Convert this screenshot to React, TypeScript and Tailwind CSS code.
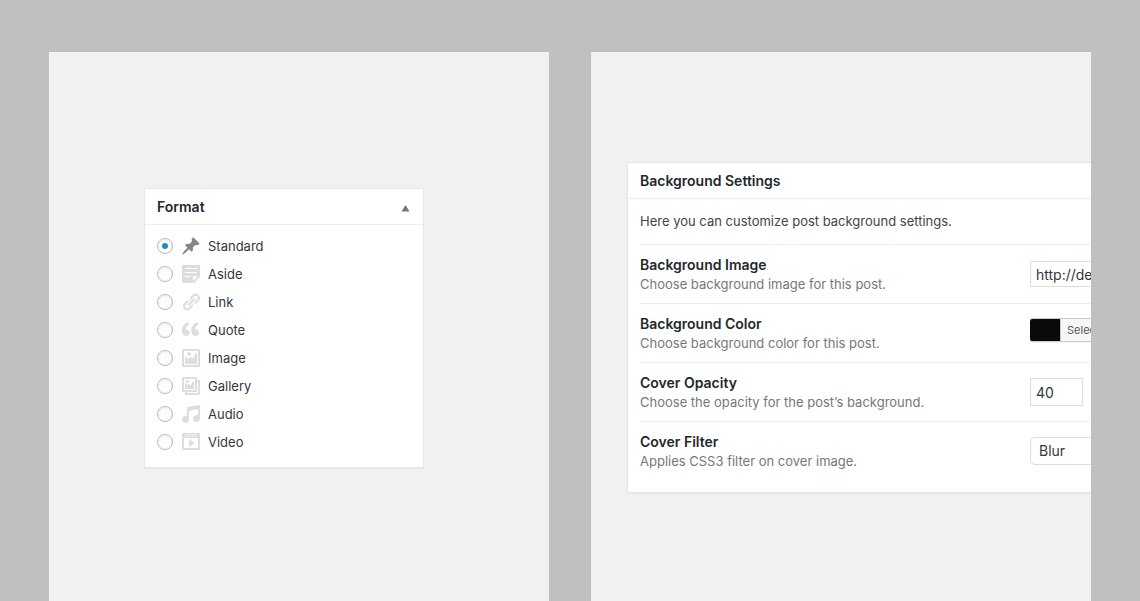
import React, { useState } from 'react';

interface PostFormat {
  id: string;
  label: string;
  icon: string;
}

const FORMATS: PostFormat[] = [
  {
    id: 'standard',
    label: 'Standard',
    icon: 'M10.44 3.02l1.82-1.82 6.36 6.35-1.83 1.82c-1.05-.68-2.48-.57-3.41.36l-.75.75c-.92.93-1.04 2.35-.35 3.41l-1.83 1.82-2.41-2.41-2.8 2.79c-.42.42-3.38 2.71-3.8 2.29s1.86-3.39 2.28-3.81l2.79-2.79L4.1 9.36l1.83-1.82c1.05.69 2.48.57 3.4-.36l.75-.75c.93-.92 1.05-2.35.36-3.41z'
  },
  {
    id: 'aside',
    label: 'Aside',
    icon: 'M1 1h18v12l-6 6H1V1zm3 3v1h12V4H4zm0 4v1h12V8H4zm6 5v-1H4v1h6zm2 4l5-5h-5v5z'
  },
  {
    id: 'link',
    label: 'Link',
    icon: 'M17.74 2.76c1.68 1.69 1.68 4.41 0 6.1l-1.53 1.52c-1.12 1.12-2.7 1.47-4.14 1.09l2.62-2.61.76-.77.76-.76c.84-.84.84-2.2 0-3.04-.84-.85-2.2-.85-3.04 0l-.77.76-3.38 3.38c-.37-1.44-.02-3.02 1.1-4.14l1.52-1.53c1.69-1.68 4.42-1.68 6.1 0zM8.59 13.43l5.34-5.34c.42-.42.42-1.1 0-1.52-.44-.43-1.13-.39-1.53 0l-5.33 5.34c-.42.42-.42 1.1 0 1.52.44.43 1.13.39 1.52 0zm-.76 2.29l4.14-4.15c.38 1.44.03 3.02-1.09 4.14l-1.52 1.53c-1.69 1.68-4.41 1.68-6.1 0-1.68-1.68-1.68-4.42 0-6.1l1.53-1.52c1.12-1.12 2.7-1.47 4.14-1.1l-4.14 4.15c-.85.84-.85 2.2 0 3.05.84.84 2.2.84 3.04 0z'
  },
  {
    id: 'quote',
    label: 'Quote',
    icon: 'M8.54 12.74c0-.87-.24-1.61-.72-2.22-.73-.92-2.14-1.03-2.96-.85-.34-1.93 1.3-4.39 3.42-5.45L6.65 1.94C3.45 3.46.31 6.96.85 11.37 1.19 14.16 2.8 16 5.08 16c1 0 1.83-.29 2.48-.88.66-.59.98-1.38.98-2.38zm9.43 0c0-.87-.24-1.61-.72-2.22-.73-.92-2.14-1.03-2.96-.85-.34-1.93 1.3-4.39 3.42-5.45l-1.63-2.28c-3.2 1.52-6.34 5.02-5.8 9.43.34 2.79 1.95 4.63 4.23 4.63 1 0 1.83-.29 2.48-.88.66-.59.98-1.38.98-2.38z'
  },
  {
    id: 'image',
    label: 'Image',
    icon: 'M2.25 1h15.5c.69 0 1.25.56 1.25 1.25v15.5c0 .69-.56 1.25-1.25 1.25H2.25C1.56 19 1 18.44 1 17.75V2.25C1 1.56 1.56 1 2.25 1zM17 17V3H3v14h14zM10 6c0-1.1-.9-2-2-2s-2 .9-2 2 .9 2 2 2 2-.9 2-2zm3 5s0-6 3-6v10c0 .55-.45 1-1 1H5c-.55 0-1-.45-1-1V8c2 0 3 4 3 4s1-3 3-3 3 2 3 2z'
  },
  {
    id: 'gallery',
    label: 'Gallery',
    icon: 'M16 4h1.96c.57 0 1.04.47 1.04 1.04v12.92c0 .57-.47 1.04-1.04 1.04H5.04C4.47 19 4 18.53 4 17.96V16H2.04C1.47 16 1 15.53 1 14.96V2.04C1 1.47 1.47 1 2.04 1h12.92c.57 0 1.04.47 1.04 1.04V4zM3 14h11V3H3v11zm5-8.5C8 4.67 7.33 4 6.5 4S5 4.67 5 5.5 5.67 7 6.5 7 8 6.33 8 5.5zm2 4.5s1-5 3-5v8H4V7c2 0 2 3 2 3s.33-2 2-2 2 2 2 2zm7 7V6h-1v8.96c0 .57-.47 1.04-1.04 1.04H6v1h11z'
  },
  {
    id: 'audio',
    label: 'Audio',
    icon: 'M6.99 3.08l11.02-2c.55-.08.99.45.99 1V14.5c0 1.94-1.57 3.5-3.5 3.5S12 16.44 12 14.5c0-1.93 1.57-3.5 3.5-3.5.54 0 1.04.14 1.5.35V5.08l-9 2V16c-.24 1.7-1.74 3-3.5 3C2.57 19 1 17.44 1 15.5 1 13.57 2.57 12 4.5 12c.54 0 1.04.14 1.5.35V4.08c0-.55.44-.91.99-1z'
  },
  {
    id: 'video',
    label: 'Video',
    icon: 'M2 1h16c.55 0 1 .45 1 1v16l-18-.02V2c0-.55.45-1 1-1zm4 1L4 5h1l2-3H6zm4 0H9L7 5h1zm3 0h-1l-2 3h1zm3 0h-1l-2 3h1zm1 14V6H3v10h14zM8 7l6 4-6 4V7z'
  }
];

interface SettingRowProps {
  title: string;
  description: string;
  htmlFor: string;
  children: React.ReactNode;
}

const SettingRow: React.FC<SettingRowProps> = ({ title, description, htmlFor, children }) => (
  <div className="flex items-center border-b border-[#eee] py-[10px] last:border-b-0">
    <div className="w-[390px] shrink-0">
      <label htmlFor={htmlFor} className="block text-sm leading-5 font-semibold text-[#23282d]">
        {title}
      </label>
      <p className="text-[13px] leading-[18px] text-[#777]">{description}</p>
    </div>
    <div className="-my-2 flex items-center">{children}</div>
  </div>
);

const FormatBox = () => {
  const [format, setFormat] = useState('standard');
  const [open, setOpen] = useState(true);

  return (
    <section className="w-[280px] border border-[#e5e5e5] bg-white shadow-[0_1px_1px_rgba(0,0,0,0.04)]">
      <div className="flex h-9 items-center justify-between border-b border-[#eee] px-3">
        <h2 className="text-sm font-semibold text-[#23282d]">Format</h2>
        <button type="button" aria-label="Toggle panel" aria-expanded={open} onClick={() => setOpen(!open)}>
          <svg className="h-3 w-3 fill-[#72777c]" viewBox="0 0 12 12">
            <path d="M6.5 4l4 6.5h-8z" />
          </svg>
        </button>
      </div>

      {open && (
        <div className="px-3 pt-[7px] pb-[11px]">
          {FORMATS.map(item => (
            <label key={item.id} className="flex h-7 items-center text-[13px] text-[#32373c]">
              <input
                type="radio"
                name="post-format"
                value={item.id}
                checked={format === item.id}
                onChange={() => setFormat(item.id)}
                className="mr-2 grid h-4 w-4 appearance-none place-items-center rounded-full border border-[#b4b9be] bg-white shadow-inner before:h-[6px] before:w-[6px] before:rounded-full checked:before:bg-[#1e8cbe]"
              />
              <svg
                className={`mr-[7px] h-5 w-5 ${format === item.id ? 'fill-[#82878c]' : 'fill-[#ddd]'}`}
                viewBox="0 0 20 20"
              >
                <path d={item.icon} />
              </svg>
              <span className="pt-0.5">{item.label}</span>
            </label>
          ))}
        </div>
      )}
    </section>
  );
};

const BackgroundBox = () => {
  const [image, setImage] = useState('http://demo.example.com/background.jpg');
  const [opacity, setOpacity] = useState('40');

  return (
    <section className="w-[680px] border border-[#e5e5e5] bg-white shadow-[0_1px_1px_rgba(0,0,0,0.04)]">
      <div className="flex h-9 items-center border-b border-[#eee] px-3">
        <h2 className="text-sm font-semibold text-[#23282d]">Background Settings</h2>
      </div>

      <div className="px-3 pb-3">
        <p className="border-b border-[#eee] py-3 text-[13px] leading-[21px] text-[#444]">
          Here you can customize post background settings.
        </p>

        <SettingRow title="Background Image" description="Choose background image for this post." htmlFor="bg-image">
          <input
            id="bg-image"
            type="text"
            value={image}
            onChange={e => setImage(e.target.value)}
            className="h-[26px] w-[230px] border border-[#ddd] px-[5px] text-sm text-[#32373c]"
          />
        </SettingRow>

        <SettingRow title="Background Color" description="Choose background color for this post." htmlFor="bg-color">
          <button
            id="bg-color"
            type="button"
            className="mb-[6px] flex h-6 overflow-hidden rounded-[3px] border border-l-0 border-[#ccc] bg-[#0a0a0a] pl-[30px] shadow-xs"
          >
            <span className="border-l border-[#ccc] bg-[#f7f7f7] px-[6px] text-[11px] leading-[22px] text-[#555]">
              Select Color
            </span>
          </button>
        </SettingRow>

        <SettingRow title="Cover Opacity" description="Choose the opacity for the post’s background." htmlFor="bg-opacity">
          <input
            id="bg-opacity"
            type="text"
            value={opacity}
            onChange={e => setOpacity(e.target.value)}
            className="h-7 w-[53px] border border-[#ddd] px-[5px] text-sm text-[#32373c]"
          />
        </SettingRow>

        <SettingRow title="Cover Filter" description="Applies CSS3 filter on cover image." htmlFor="bg-filter">
          <select
            id="bg-filter"
            defaultValue="Blur"
            className="h-7 w-[120px] appearance-none rounded-[5px] border border-[#ddd] bg-white px-2 text-sm text-[#32373c]"
          >
            <option>None</option>
            <option>Blur</option>
            <option>Grayscale</option>
          </select>
        </SettingRow>
      </div>
    </section>
  );
};

const App = () => {
  return (
    <main className="grid min-h-screen grid-cols-2 gap-[42px] bg-[#c0c0c0] px-[49px] pt-[52px] font-['Inter',sans-serif]">
      <div className="overflow-hidden bg-[#f1f1f1] pt-[136px] pl-[95px]">
        <FormatBox />
      </div>
      <div className="overflow-hidden bg-[#f1f1f1] pt-[110px] pl-9">
        <BackgroundBox />
      </div>
    </main>
  );
};

export default App;
